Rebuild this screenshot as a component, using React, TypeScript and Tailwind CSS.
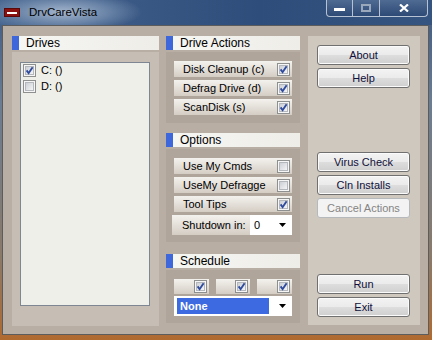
import React from "react";

const font = "font-['Liberation_Sans',Arial,sans-serif]";

function Check({ on }: { on?: boolean }) {
  return (
    <svg width="13" height="13" viewBox="0 0 13 13" className="shrink-0">
      <rect x="0.5" y="0.5" width="12" height="12" fill="#f6f6f6" stroke="#8e8f8f" />
      <rect x="2.5" y="2.5" width="8" height="8" fill="url(#cbg)" stroke="#b4b8bd" />
      {on && (
        <path d="M3.6 6.4 L5.6 9.2 L9.6 3.2" fill="none" stroke="#2f4b9e" strokeWidth="1.9" />
      )}
    </svg>
  );
}

function Header({ title }: { title: string }) {
  return (
    <div className="h-[14px] flex bg-[linear-gradient(to_right,#f6f6f3,#eeede8)]">
      <div className="w-[7px] bg-[#3f67dc]" />
      <span className="pl-[7px] text-[12px] leading-[14px] text-black">{title}</span>
    </div>
  );
}

function Row({ label, on }: { label: string; on?: boolean }) {
  return (
    <div className="h-[16px] flex items-center justify-between pl-[9px] pr-[2px] bg-[linear-gradient(to_bottom,#f4f2ee,#d4cdc4)]">
      <span className="text-[11px] leading-[16px] text-black">{label}</span>
      <Check on={on} />
    </div>
  );
}

function Btn({ label, disabled }: { label: string; disabled?: boolean }) {
  return (
    <div
      className={
        disabled
          ? "h-[20px] rounded-[3px] border border-[#b5b9bc] bg-[#f3f3f3] flex items-center justify-center text-[11px] text-[#848484]"
          : "h-[20px] rounded-[3px] border border-[#707070] bg-[linear-gradient(to_bottom,#f3f3f3_0%,#ebebeb_48%,#dddddd_52%,#cfcfcf_100%)] shadow-[inset_0_0_0_1px_#fbfbfb] flex items-center justify-center text-[11px] text-[#10103a]"
      }
    >
      {label}
    </div>
  );
}

function Arrow() {
  return (
    <svg width="8" height="5" viewBox="0 0 8 5">
      <path d="M0 0 H7 L3.5 4 Z" fill="#000" />
    </svg>
  );
}

export default function App() {
  return (
    <div
      className={`${font} w-[432px] h-[340px] overflow-hidden flex flex-col bg-[linear-gradient(to_bottom,#3b5884_0%,#6a7d93_30%,#8a7a6a_75%,#b06a30_100%)]`}
    >
      <svg width="0" height="0" className="absolute">
        <defs>
          <linearGradient id="cbg" x1="0" y1="0" x2="1" y2="1">
            <stop offset="0" stopColor="#c9cdd3" />
            <stop offset="1" stopColor="#f7f7f7" />
          </linearGradient>
        </defs>
      </svg>

      {/* title bar */}
      <div className="h-[25px] flex items-start bg-[radial-gradient(ellipse_80px_20px_at_62px_12px,#a3b5cc_0%,#6c86a9_55%,transparent_100%),linear-gradient(to_right,#46658f,#2f4d7a_60%,#35547f)]">
        <div className="mt-[8px] ml-[4px] w-[16px] h-[9px] bg-[#8b1111] border border-[#5a0a0a] flex items-center justify-center">
          <div className="w-[10px] h-[2px] bg-white" />
        </div>
        <span className="ml-[9px] mt-[5px] text-[11.5px] leading-[14px] text-black">DrvCareVista</span>
        <div className="ml-auto mr-[4px] flex h-[17px] border border-t-0 border-[#b7c3d3] rounded-b-[4px] bg-[linear-gradient(to_bottom,#4f6b93,#2d4a76)]">
          <div className="w-[26px] flex items-end justify-center pb-[5px] border-r border-[#b7c3d3]">
            <div className="w-[11px] h-[3px] bg-white" />
          </div>
          <div className="w-[27px] flex items-center justify-center border-r border-[#b7c3d3]">
            <div className="w-[10px] h-[8px] border-2 border-[#9aa8bb]" />
          </div>
          <div className="w-[47px] flex items-center justify-center">
            <svg width="10" height="8" viewBox="0 0 10 8">
              <path d="M1 0.5 L9 7.5 M9 0.5 L1 7.5" stroke="#fff" strokeWidth="2.2" />
            </svg>
          </div>
        </div>
      </div>

      {/* client area */}
      <div className="ml-[2px] w-[427px] h-[310px] border border-[#5c5c5c] bg-[#b8aea3] flex pt-[10px] pl-[9px] pr-[7px] gap-[7px]">
        {/* drives */}
        <div className="w-[147px] flex flex-col">
          <Header title="Drives" />
          <div className="mt-[2px] h-[274px] bg-[#c6beb4] pt-[10px] pl-[8px] pr-[9px]">
            <div className="h-[244px] bg-[#efefe9] border border-[#7e8694] pt-[1px] pl-[2px] flex flex-col gap-[3px]">
              <div className="flex items-center gap-[5px] h-[13px]">
                <Check on />
                <span className="text-[11px] leading-[13px] text-black">C: ()</span>
              </div>
              <div className="flex items-center gap-[5px] h-[13px]">
                <Check />
                <span className="text-[11px] leading-[13px] text-black">D: ()</span>
              </div>
            </div>
          </div>
        </div>

        {/* middle */}
        <div className="w-[134px] flex flex-col">
          <Header title="Drive Actions" />
          <div className="mt-[2px] bg-[#afa59a] pt-[9px] pb-[8px] pl-[8px] pr-[8px] flex flex-col gap-[3px]">
            <Row label="Disk Cleanup (c)" on />
            <Row label="Defrag Drive (d)" on />
            <Row label="ScanDisk (s)" on />
          </div>

          <div className="mt-[10px]">
            <Header title="Options" />
          </div>
          <div className="mt-[2px] bg-[#afa59a] pt-[9px] pb-[7px] pl-[8px] pr-[8px] flex flex-col gap-[3px]">
            <Row label="Use My Cmds" />
            <Row label="UseMy Defragge" />
            <Row label="Tool Tips" on />
            <div className="h-[20px] flex -ml-[2px]">
              <div className="w-[78px] pl-[10px] flex items-center bg-[linear-gradient(to_bottom,#f4f2ee,#d4cdc4)] text-[11px] text-black">
                Shutdown in:
              </div>
              <div className="flex-1 bg-white flex items-center justify-between pl-[4px] pr-[5px] text-[11px] text-black">
                <span>0</span>
                <Arrow />
              </div>
            </div>
          </div>

          <div className="mt-[12px]">
            <Header title="Schedule" />
          </div>
          <div className="mt-[2px] bg-[#afa59a] pt-[9px] pb-[7px] pl-[8px] pr-[8px] flex flex-col gap-[2px]">
            <div className="h-[15px] flex gap-[7px]">
              {[0, 1, 2].map((i) => (
                <div
                  key={i}
                  className="flex-1 flex items-center justify-end pr-[2px] bg-[linear-gradient(to_bottom,#f4f2ee,#d4cdc4)]"
                >
                  <Check on />
                </div>
              ))}
            </div>
            <div className="h-[20px] bg-white flex items-center pl-[3px] pr-[5px] gap-[10px]">
              <div className="flex-1 h-[16px] bg-[#3d6ae0] pl-[3px] text-[11px] leading-[16px] font-bold text-white">
                None
              </div>
              <Arrow />
            </div>
          </div>
        </div>

        {/* buttons */}
        <div className="w-[112px] h-[289px] ml-[1px] bg-[#cfc8bf] pt-[9px] pl-[9px] pr-[10px] flex flex-col">
          <div className="flex flex-col gap-[3px]">
            <Btn label="About" />
            <Btn label="Help" />
          </div>
          <div className="mt-[64px] flex flex-col gap-[3px]">
            <Btn label="Virus Check" />
            <Btn label="Cln Installs" />
            <Btn label="Cancel Actions" disabled />
          </div>
          <div className="mt-[56px] flex flex-col gap-[3px]">
            <Btn label="Run" />
            <Btn label="Exit" />
          </div>
        </div>
      </div>
    </div>
  );
}
